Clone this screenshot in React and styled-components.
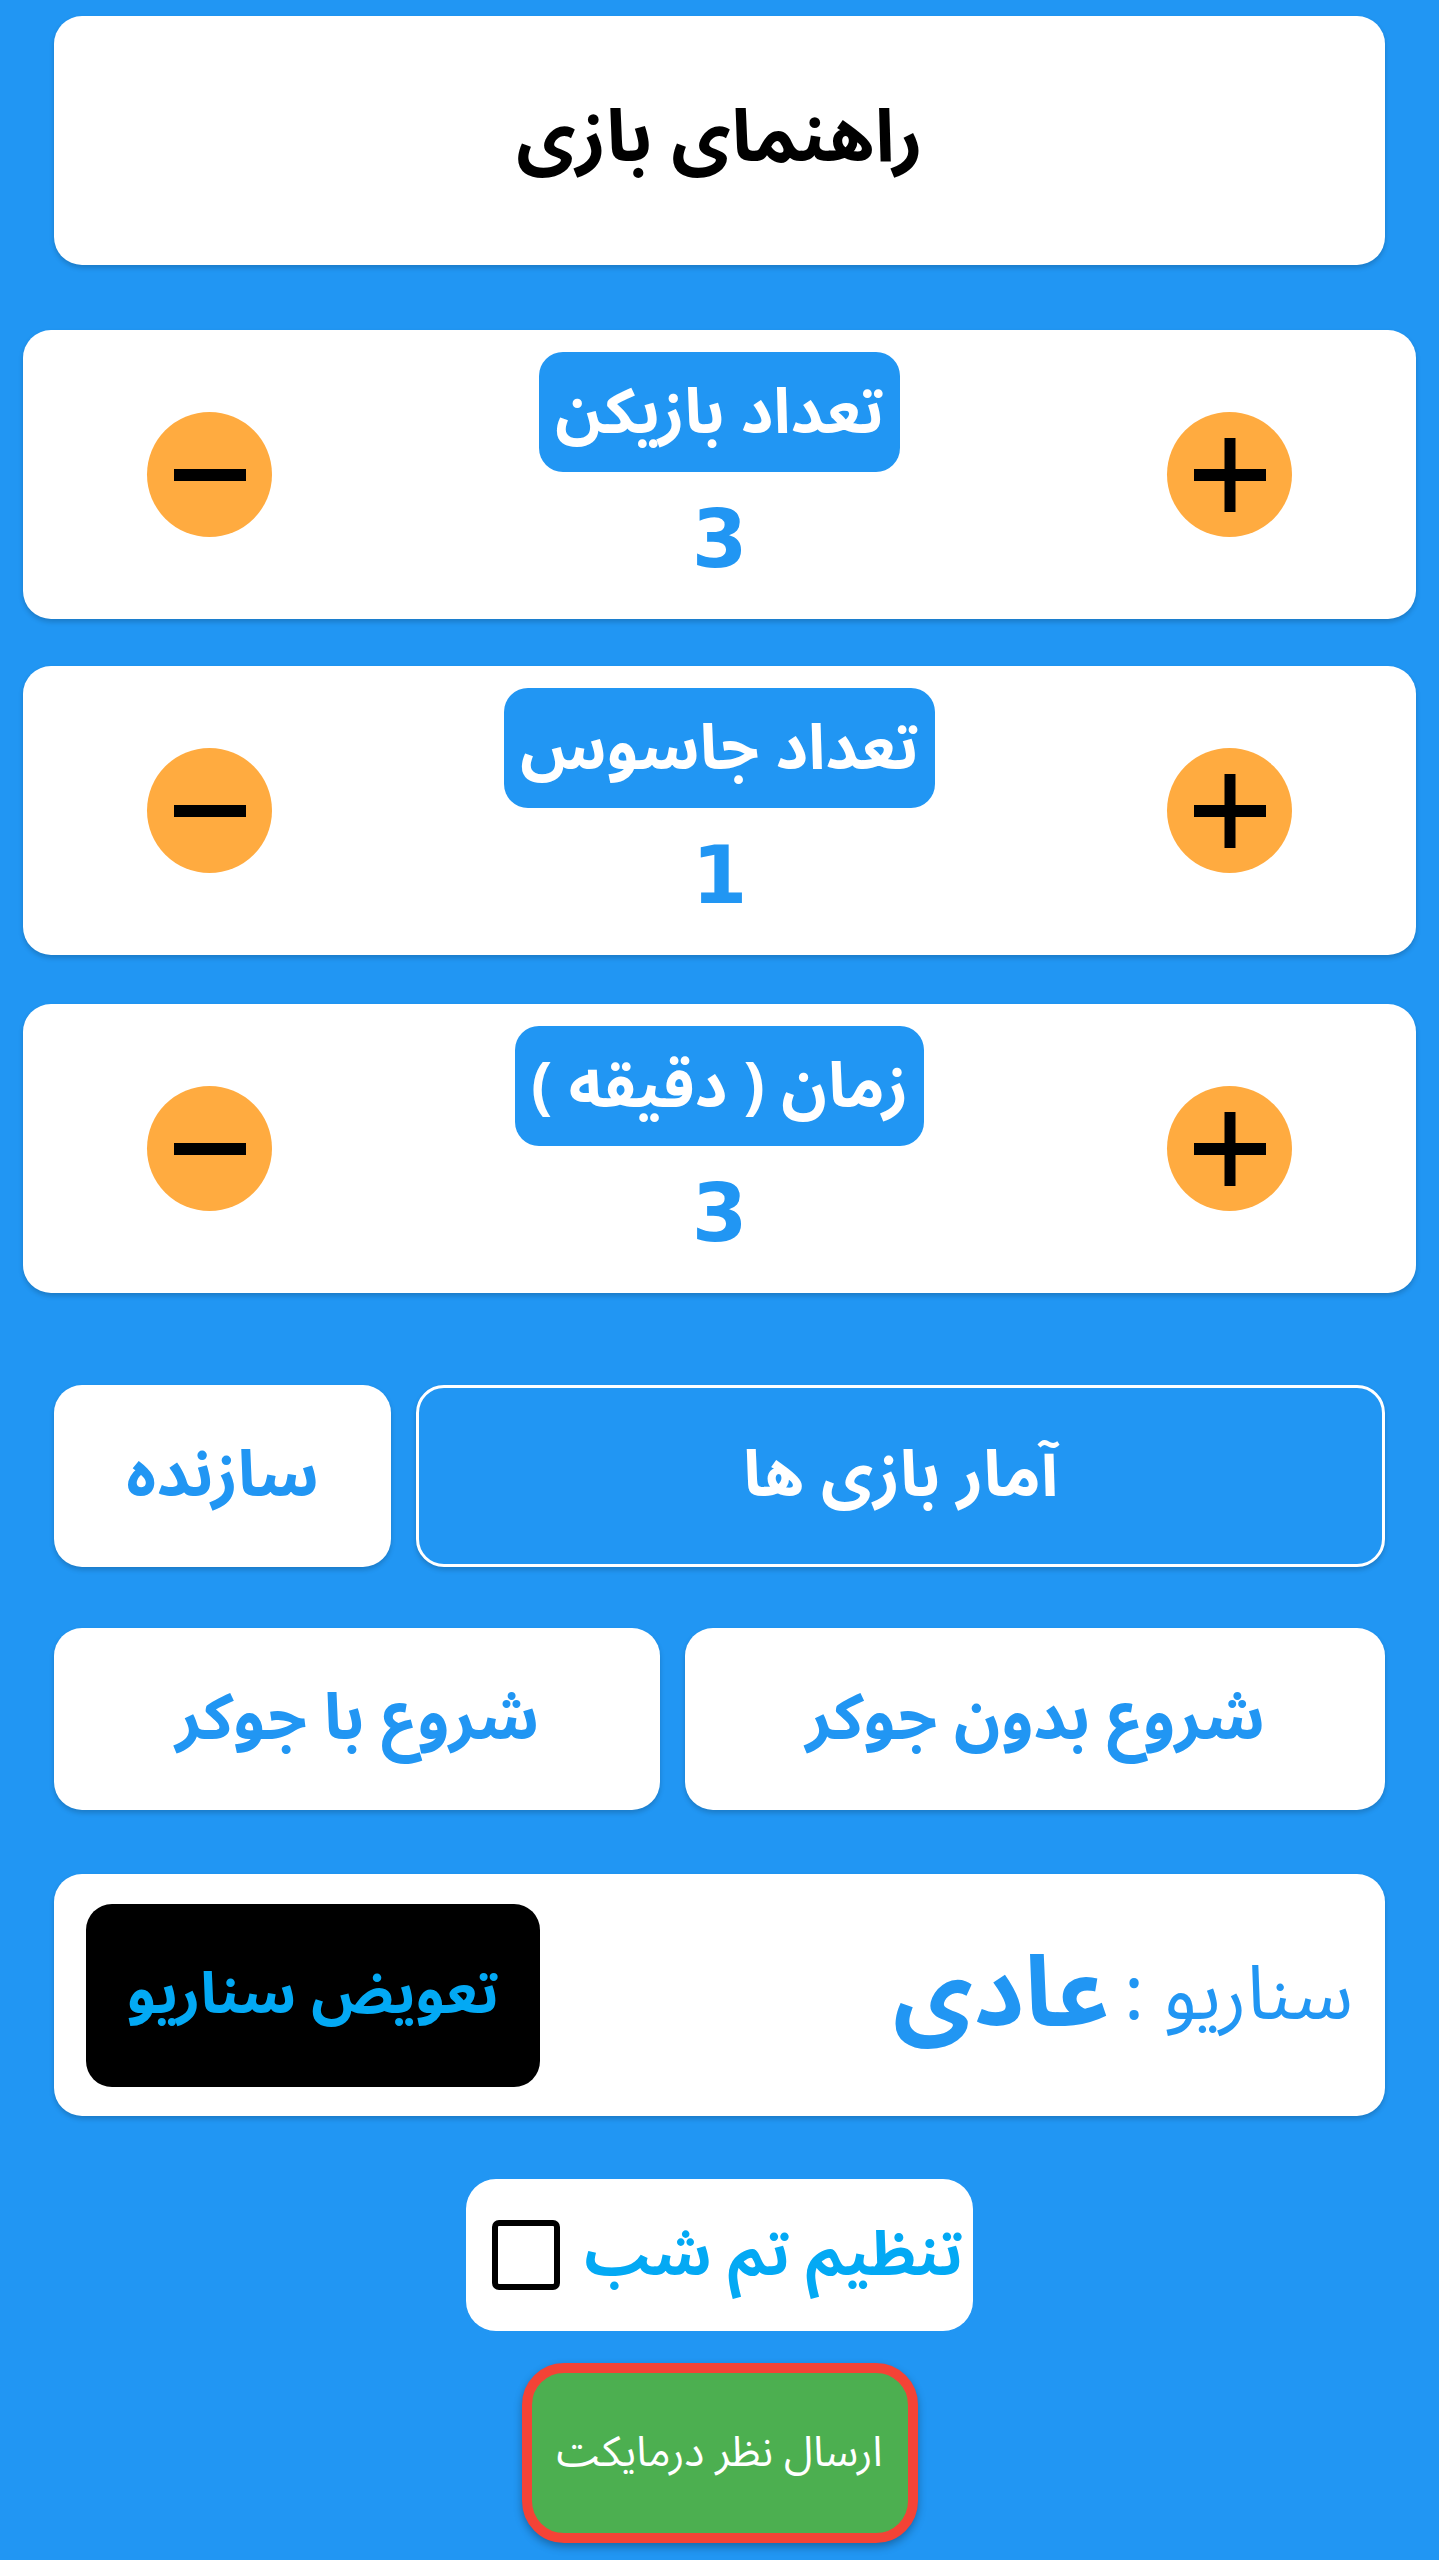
import React, { useState } from 'react';
import styled, { createGlobalStyle } from 'styled-components';

const GlobalStyle = createGlobalStyle`
    html, body {
        margin: 0;
        padding: 0;
        background: #2196F3;
    }
    body {
        font-family: "Noto Sans Arabic", "Noto Naskh Arabic", "DejaVu Sans", sans-serif;
    }
`

const Page = styled.div`
    direction: rtl;
    min-height: 2560px;
    box-sizing: border-box;
    padding: 16px 0 20px;
    display: flex;
    flex-direction: column;
    background: #2196F3;
`

const Card = styled.div`
    background: #fff;
    border-radius: 28px;
    box-shadow: 0 3px 5px rgba(0, 0, 0, 0.18);
`

const GuideCard = styled(Card)`
    margin: 0 54px;
    height: 249px;
    display: flex;
    align-items: center;
    justify-content: center;
    font-size: 73px;
    font-weight: bold;
    color: #000;
    padding-bottom: 6px;
    box-sizing: border-box;
`

const CounterCard = styled(Card)`
    margin: ${p => p.top}px 23px 0;
    height: 289px;
    box-sizing: border-box;
    padding: 22px 124px;
    display: flex;
    align-items: center;
    justify-content: space-between;
`

const RoundButton = styled.button`
    width: 125px;
    height: 125px;
    border-radius: 50%;
    border: none;
    padding: 0;
    background: #FFAB40;
    display: flex;
    align-items: center;
    justify-content: center;
    flex-shrink: 0;
    cursor: pointer;
`

const Middle = styled.div`
    flex: 1;
    align-self: stretch;
    display: flex;
    flex-direction: column;
    align-items: center;
`

const Label = styled.div`
    background: #2196F3;
    color: #fff;
    font-size: 63px;
    font-weight: bold;
    line-height: 1;
    border-radius: 24px;
    padding: 0 16px;
    height: 120px;
    display: flex;
    align-items: center;
    white-space: nowrap;
`

const Value = styled.div`
    margin-top: 20px;
    color: #2196F3;
    font-family: "DejaVu Sans", sans-serif;
    font-size: 80px;
    font-weight: bold;
    line-height: 96px;
`

const ButtonRow = styled.div`
    margin: ${p => p.top}px 54px 0;
    display: flex;
    gap: 25px;
    height: 182px;
`

const MenuButton = styled.button`
    flex: ${p => p.grow} 1 0;
    border-radius: 28px;
    font-family: inherit;
    font-size: 64px;
    font-weight: bold;
    line-height: 1;
    cursor: pointer;
    box-shadow: 0 3px 5px rgba(0, 0, 0, 0.18);
    background: ${p => p.outline ? '#2196F3' : '#fff'};
    color: ${p => p.outline ? '#fff' : '#2196F3'};
    border: ${p => p.outline ? '3px solid #fff' : 'none'};
`

const ScenarioCard = styled(Card)`
    margin: 64px 54px 0;
    height: 242px;
    box-sizing: border-box;
    padding: 28px 32px;
    display: flex;
    align-items: center;
    justify-content: space-between;
`

const ScenarioText = styled.div`
    color: #2196F3;
    font-size: 75px;
    line-height: 1;
    display: flex;
    align-items: center;
    gap: 14px;
    b {
        font-size: 98px;
    }
`

const SwapButton = styled.button`
    width: 454px;
    height: 183px;
    border: none;
    border-radius: 26px;
    background: #000;
    color: #03A9F4;
    font-family: inherit;
    font-size: 58px;
    font-weight: bold;
    line-height: 1;
    white-space: nowrap;
    cursor: pointer;
`

const ThemeBox = styled(Card)`
    align-self: center;
    margin-top: 63px;
    height: 152px;
    box-sizing: border-box;
    padding: 0 10px 0 26px;
    display: flex;
    align-items: center;
    gap: 24px;
    border-radius: 30px;
    box-shadow: none;
    cursor: pointer;
`

const ThemeText = styled.span`
    color: #03A9F4;
    font-size: 61px;
    font-weight: bold;
    line-height: 1;
`

const CheckSquare = styled.span`
    width: 56px;
    height: 58px;
    border: 6px solid #000;
    border-radius: 7px;
    background: ${p => p.checked ? '#000' : '#fff'};
`

const FeedbackButton = styled.button`
    align-self: center;
    margin-top: 32px;
    width: 396px;
    height: 180px;
    border: 10px solid #F44336;
    border-radius: 42px;
    background: #4CAF50;
    color: #fff;
    font-family: inherit;
    font-size: 42px;
    line-height: 1;
    cursor: pointer;
    box-shadow: 0 4px 8px rgba(0, 0, 0, 0.3);
`

const SignIcon = ({ plus }) => (
    <svg width="76" height="76" viewBox="0 0 76 76">
        <line x1="2" y1="38" x2="74" y2="38" stroke="#000" strokeWidth="12" />
        {plus && <line x1="38" y1="1" x2="38" y2="75" stroke="#000" strokeWidth="11" />}
    </svg>
)

const Counter = ({ label, value, top, onChange }) => (
    <CounterCard top={top}>
        <RoundButton onClick={() => onChange(value + 1)}>
            <SignIcon plus />
        </RoundButton>
        <Middle>
            <Label>{label}</Label>
            <Value>{value}</Value>
        </Middle>
        <RoundButton onClick={() => onChange(Math.max(1, value - 1))}>
            <SignIcon />
        </RoundButton>
    </CounterCard>
)

const App = () => {
    const [players, setPlayers] = useState(3);
    const [spies, setSpies] = useState(1);
    const [minutes, setMinutes] = useState(3);
    const [dark, setDark] = useState(false);

    return (
        <Page>
            <GlobalStyle />
            <GuideCard>راهنمای بازی</GuideCard>

            <Counter top={65} label="تعداد بازیکن" value={players} onChange={setPlayers} />
            <Counter top={47} label="تعداد جاسوس" value={spies} onChange={setSpies} />
            <Counter top={49} label="زمان ( دقیقه )" value={minutes} onChange={setMinutes} />

            <ButtonRow top={92}>
                <MenuButton grow={971} outline>آمار بازی ها</MenuButton>
                <MenuButton grow={332}>سازنده</MenuButton>
            </ButtonRow>
            <ButtonRow top={61}>
                <MenuButton grow={701}>شروع بدون جوکر</MenuButton>
                <MenuButton grow={606}>شروع با جوکر</MenuButton>
            </ButtonRow>

            <ScenarioCard>
                <ScenarioText>
                    <span>سناریو :</span>
                    <b>عادی</b>
                </ScenarioText>
                <SwapButton>تعویض سناریو</SwapButton>
            </ScenarioCard>

            <ThemeBox onClick={() => setDark(!dark)}>
                <ThemeText>تنظیم تم شب</ThemeText>
                <CheckSquare checked={dark} />
            </ThemeBox>

            <FeedbackButton>ارسال نظر درمایکت</FeedbackButton>
        </Page>
    )
}

export default App;
